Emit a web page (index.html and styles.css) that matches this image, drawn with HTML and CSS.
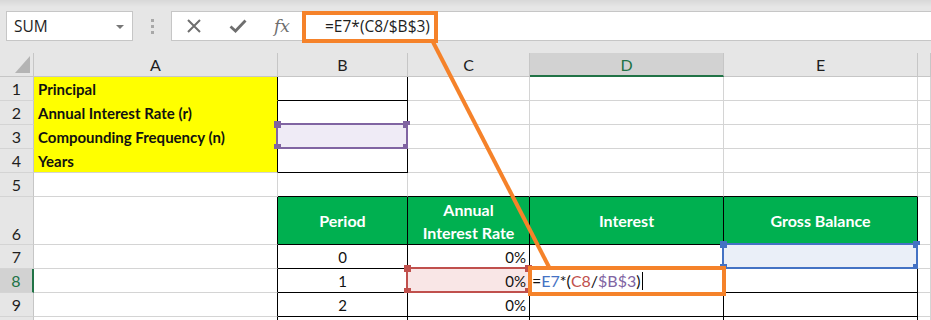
FILE: index.html
```html
<!DOCTYPE html>
<html>
<head>
<meta charset="utf-8">
<link rel="stylesheet" href="styles.css">
</head>
<body>
<div class="app">
  <div class="toolbar">
    <div class="namebox"><span>SUM</span><span class="caret"></span></div>
    <div class="grip"><i></i><i></i><i></i></div>
    <div class="fbar">
      <div class="fbtn">
        <svg width="16" height="16" viewBox="0 0 16 16"><path d="M2 2 L14 14 M14 2 L2 14" stroke="#6e6e6e" stroke-width="2" fill="none"/></svg>
      </div>
      <div class="fbtn">
        <svg width="18" height="14" viewBox="0 0 18 14"><path d="M1.5 7.5 L6.5 12 L16.5 1.5" stroke="#6e6e6e" stroke-width="2.8" fill="none"/></svg>
      </div>
      <div class="fbtn"><span class="fx">fx</span></div>
      <div class="ftext">=E7*(C8/$B$3)</div>
    </div>
  </div>

  <div class="grid">
    <!-- header -->
    <div class="c h corner"><span class="tri"></span></div>
    <div class="c h">A</div>
    <div class="c h">B</div>
    <div class="c h">C</div>
    <div class="c h hsel">D</div>
    <div class="c h">E</div>
    <div class="c h"></div>

    <!-- row 1 -->
    <div class="c r">1</div>
    <div class="c y">Principal</div>
    <div class="c bk"></div>
    <div class="c"></div>
    <div class="c"></div>
    <div class="c"></div>
    <div class="c"></div>

    <!-- row 2 -->
    <div class="c r">2</div>
    <div class="c y">Annual Interest Rate (r)</div>
    <div class="c bk"></div>
    <div class="c"></div>
    <div class="c"></div>
    <div class="c"></div>
    <div class="c"></div>

    <!-- row 3 -->
    <div class="c r">3</div>
    <div class="c y">Compounding Frequency (n)</div>
    <div class="c bk"><div class="sel sel-purple"><i class="hd tl"></i><i class="hd tr"></i><i class="hd bl"></i><i class="hd br"></i></div></div>
    <div class="c"></div>
    <div class="c"></div>
    <div class="c"></div>
    <div class="c"></div>

    <!-- row 4 -->
    <div class="c r">4</div>
    <div class="c y y-last">Years</div>
    <div class="c bk"></div>
    <div class="c"></div>
    <div class="c"></div>
    <div class="c"></div>
    <div class="c"></div>

    <!-- row 5 -->
    <div class="c r">5</div>
    <div class="c"></div>
    <div class="c bb"></div>
    <div class="c bb"></div>
    <div class="c bb"></div>
    <div class="c bb"></div>
    <div class="c"></div>

    <!-- row 6 -->
    <div class="c r r-bottom">6</div>
    <div class="c br-k"></div>
    <div class="c g">Period</div>
    <div class="c g">Annual<br>Interest Rate</div>
    <div class="c g">Interest</div>
    <div class="c g">Gross Balance</div>
    <div class="c"></div>

    <!-- row 7 -->
    <div class="c r">7</div>
    <div class="c br-k"></div>
    <div class="c bk ctr">0</div>
    <div class="c bk rt">0%</div>
    <div class="c bk"></div>
    <div class="c bk"><div class="sel sel-blue"><i class="hd tl"></i><i class="hd tr"></i><i class="hd bl"></i><i class="hd br"></i></div></div>
    <div class="c"></div>

    <!-- row 8 -->
    <div class="c r rsel">8</div>
    <div class="c br-k"></div>
    <div class="c bk ctr">1</div>
    <div class="c bk rt"><div class="sel sel-red"><i class="hd tl"></i><i class="hd tr"></i><i class="hd bl"></i><i class="hd br"></i></div><span class="val">0%</span></div>
    <div class="c bk edit"><span>=</span><span class="ref-blue">E7</span><span>*(</span><span class="ref-red">C8</span><span>/</span><span class="ref-purple">$B$3</span><span>)</span><span class="cursor"></span></div>
    <div class="c bk"></div>
    <div class="c"></div>

    <!-- row 9 -->
    <div class="c r">9</div>
    <div class="c br-k"></div>
    <div class="c bk ctr">2</div>
    <div class="c bk rt">0%</div>
    <div class="c bk"></div>
    <div class="c bk"></div>
    <div class="c"></div>

    <!-- row 10 -->
    <div class="c r"></div>
    <div class="c br-k"></div>
    <div class="c bk"></div>
    <div class="c bk"></div>
    <div class="c bk"></div>
    <div class="c bk"></div>
    <div class="c"></div>
  </div>

  <svg class="annot" width="931" height="320" viewBox="0 0 931 320">
    <g stroke="#f5822a" stroke-width="4" fill="none">
      <rect x="304" y="13" width="132" height="28"/>
      <line x1="433" y1="42" x2="549" y2="267"/>
      <rect x="530" y="268" width="194" height="26"/>
    </g>
  </svg>
</div>
</body>
</html>
```

FILE: styles.css
```css
* { box-sizing: border-box; }
html, body { margin: 0; padding: 0; }
body {
  width: 931px;
  height: 320px;
  overflow: hidden;
  background: #e6e6e6;
  font-family: Lato, "Liberation Sans", sans-serif;
  color: #111;
}
.app { position: relative; width: 931px; height: 320px; overflow: hidden; }

/* toolbar */
.toolbar {
  height: 53px;
  display: flex;
  align-items: flex-start;
  padding: 11px 0 0 6px;
  background: linear-gradient(#d8d8d8, #e6e6e6 7px);
}
.namebox {
  width: 127px;
  height: 30px;
  background: #fff;
  border: 1px solid #c6c6c6;
  display: flex;
  align-items: center;
  justify-content: space-between;
  padding: 0 8px 0 7px;
  font-family: "Open Sans", sans-serif;
  font-size: 15.5px;
  color: #1e1e1e;
}
.caret {
  width: 0; height: 0;
  border-left: 4px solid transparent;
  border-right: 4px solid transparent;
  border-top: 4px solid #777;
  margin-top: 2px;
}
.grip {
  width: 38px;
  height: 30px;
  display: flex;
  flex-direction: column;
  align-items: center;
  gap: 3px;
  padding-top: 8px;
}
.grip i { display: block; width: 3px; height: 3px; background: #a8a8a8; }
.fbar {
  flex: 1;
  height: 30px;
  background: #fff;
  border: 1px solid #c6c6c6;
  border-right: none;
  display: flex;
  align-items: center;
}
.fbtn {
  width: 44px;
  height: 100%;
  display: flex;
  align-items: center;
  justify-content: center;
}
.fx {
  font-family: "DejaVu Serif", "Liberation Serif", serif;
  font-style: italic;
  font-size: 17px;
  color: #6e6e6e;
}
.ftext {
  padding-left: 21px;
  font-family: "Open Sans", sans-serif;
  font-size: 15.5px;
  color: #1e1e1e;
}

/* grid */
.grid {
  display: grid;
  grid-template-columns: 34px 244px 130px 122px 194px 194px 1fr;
  grid-template-rows: 24px 24px 24px 24px 24px 24px 48px 24px 24px 24px 24px;
}
.c {
  position: relative;
  background: #fff;
  border-right: 1px solid #d4d4d4;
  border-bottom: 1px solid #d4d4d4;
  font-size: 15px;
  display: flex;
  align-items: center;
  padding: 0 4px;
  white-space: nowrap;
}
.h {
  background: #e6e6e6;
  border-right-color: #c6c6c6;
  border-bottom-color: #c6c6c6;
  justify-content: center;
  color: #1e1e1e;
  font-size: 16px;
}
.corner { justify-content: flex-end; align-items: flex-end; padding: 0 3px 3px 0; }
.tri {
  width: 0; height: 0;
  border-left: 15px solid transparent;
  border-bottom: 17px solid #b4b4b4;
}
.hsel {
  background: #d2d2d2;
  border-bottom: 2px solid #217346;
  color: #217346;
}
.r {
  background: #e6e6e6;
  border-right-color: #c6c6c6;
  border-bottom-color: #d4d4d4;
  justify-content: center;
  color: #1e1e1e;
  padding: 0;
  font-size: 16px;
}
.r-bottom { align-items: flex-end; padding-bottom: 1px; }
.rsel {
  background: #d2d2d2;
  border-right: 2px solid #217346;
  color: #217346;
}
.y {
  background: #ffff00;
  font-weight: bold;
  border-right-color: #000;
  border-bottom-color: #ffff00;
}
.y-last { border-bottom-color: #d4d4d4; }
.bk { border-right-color: #000; border-bottom-color: #000; }
.bb { border-bottom-color: #000; }
.br-k { border-right-color: #000; }
.g {
  background: #00b050;
  color: #fff;
  font-weight: bold;
  font-size: 16px;
  justify-content: center;
  text-align: center;
  white-space: normal;
  line-height: 23px;
  border-right-color: #000;
  border-bottom-color: #000;
}
.ctr { justify-content: center; }
.rt { justify-content: flex-end; padding-right: 3px; }
.val { position: relative; }

/* selections */
.sel {
  position: absolute;
  left: -2px; top: -2px; right: -1px; bottom: -1px;
  border: 2px solid;
}
.sel-purple { border-color: #8064a2; background: #efebf6; }
.sel-red { border-color: #c0504d; background: #f9e6e6; }
.sel-blue { border-color: #4472c4; background: #eaeff8; }
.hd {
  position: absolute;
  width: 7px; height: 7px;
}
.sel-purple .hd { background: #8064a2; }
.sel-red .hd { background: #c0504d; }
.sel-blue .hd { background: #4472c4; }
.hd.tl { left: -4px; top: -4px; }
.hd.tr { right: -4px; top: -4px; }
.hd.bl { left: -4px; bottom: -4px; }
.hd.br { right: -4px; bottom: -4px; }

/* editing */
.edit { padding-left: 2px; font-size: 16px; }
.ref-blue { color: #4472c4; }
.ref-red { color: #c0504d; }
.ref-purple { color: #8064a2; }
.cursor { display: inline-block; width: 1px; height: 18px; background: #000; margin-left: 1px; }

.annot { position: absolute; left: 0; top: 0; pointer-events: none; }
```
